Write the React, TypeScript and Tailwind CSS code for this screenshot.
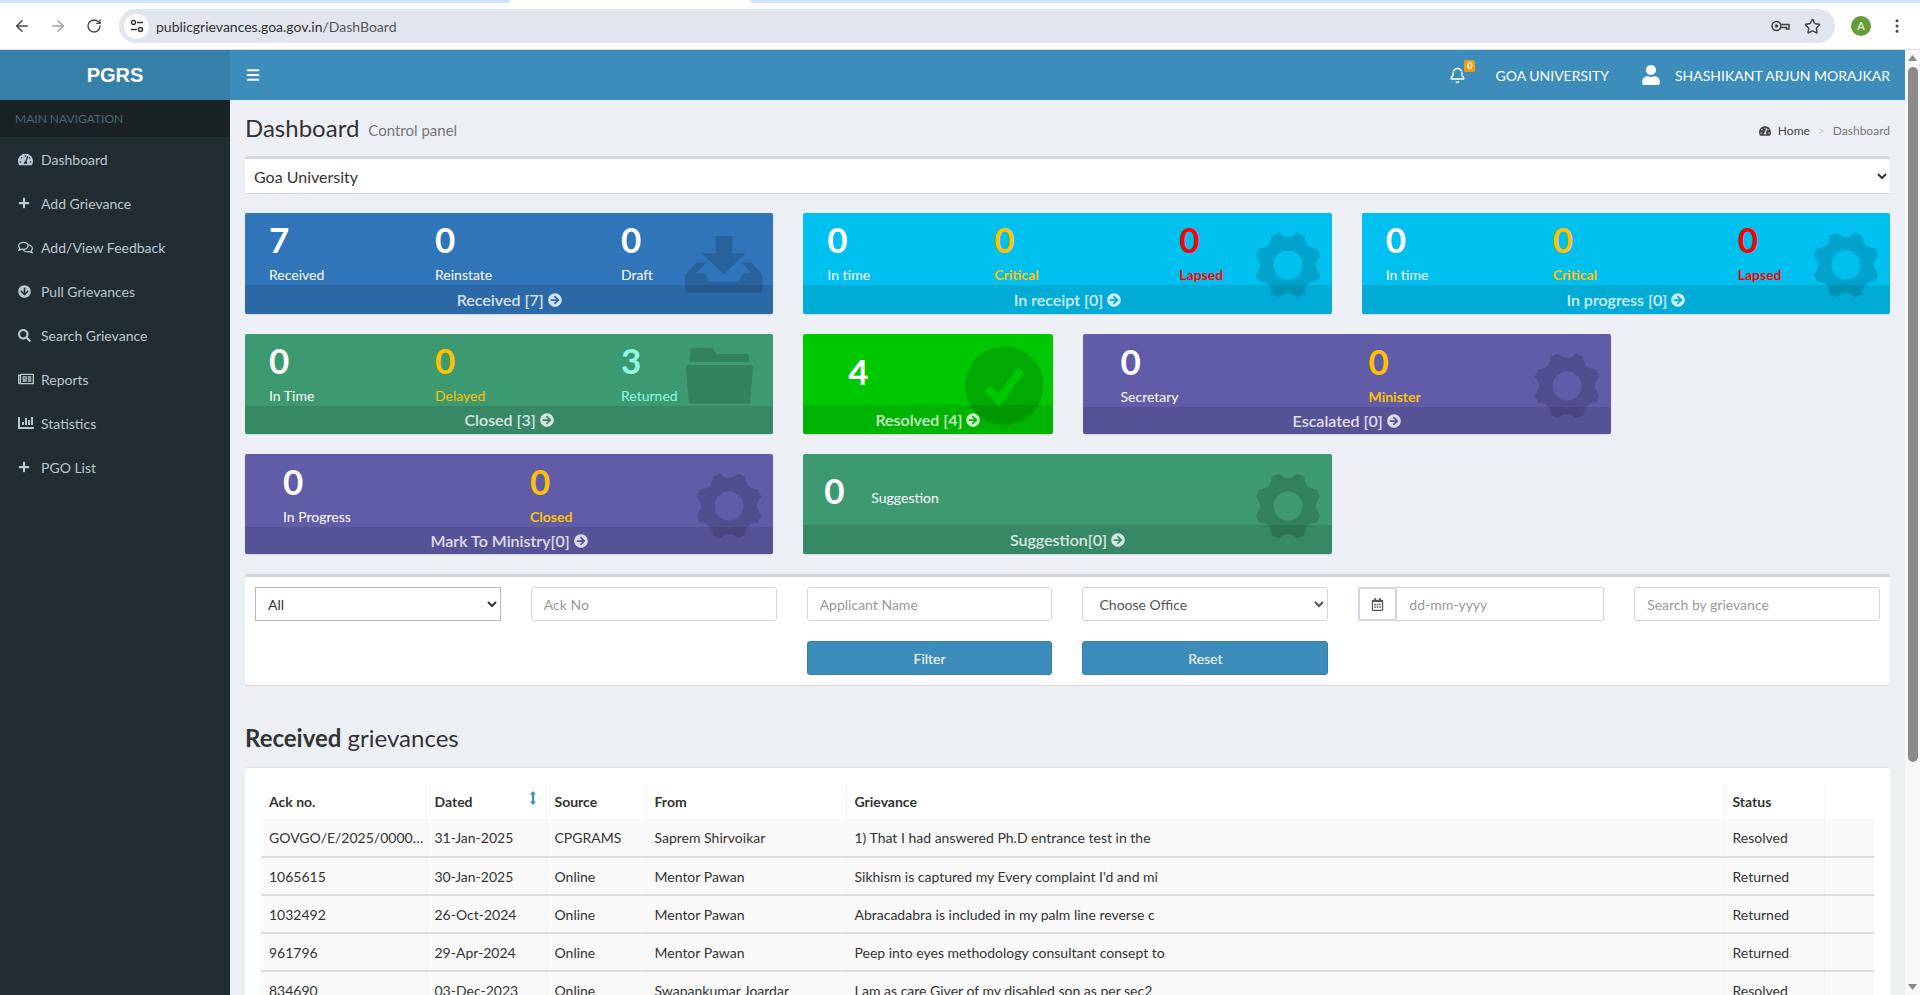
import { ArrowLeft, ArrowRight, RotateCw, Star, EllipsisVertical, Menu, Bell } from "lucide-react";
import {
  FaTachometerAlt,
  FaPlus,
  FaRegComments,
  FaArrowCircleDown,
  FaArrowCircleRight,
  FaSearch,
  FaRegNewspaper,
  FaChartBar,
  FaRegCalendarAlt,
  FaUser,
} from "react-icons/fa";

const navItems = [
  { label: "Dashboard", icon: <FaTachometerAlt size={15} /> },
  { label: "Add Grievance", icon: <FaPlus size={12} /> },
  { label: "Add/View Feedback", icon: <FaRegComments size={15} /> },
  { label: "Pull Grievances", icon: <FaArrowCircleDown size={13} /> },
  { label: "Search Grievance", icon: <FaSearch size={13} /> },
  { label: "Reports", icon: <FaRegNewspaper size={16} /> },
  { label: "Statistics", icon: <FaChartBar size={16} /> },
  { label: "PGO List", icon: <FaPlus size={12} /> },
];

// 8 tooth gear, same shape as the faded icon on the cards
function gearPath() {
  const c = 34;
  const pt = (deg: number, r: number) => {
    const a = (deg * Math.PI) / 180;
    return `${(c + r * Math.sin(a)).toFixed(2)} ${(c - r * Math.cos(a)).toFixed(2)}`;
  };
  let d = "";
  for (let i = 0; i < 8; i++) {
    const mid = i * 45 + 22.5;
    d += i === 0 ? `M${pt(mid - 7, 33.5)}` : `L${pt(mid - 7, 33.5)}`;
    d += `L${pt(mid + 7, 33.5)}`;
    d += `Q${pt(mid + 22.5, 23.5)} ${pt(mid + 38, 33.5)}`;
  }
  d += "Z";
  d += `M${c - 14.5} ${c}a14.5 14.5 0 1 0 29 0a14.5 14.5 0 1 0 -29 0Z`;
  return d;
}

function Gear() {
  return (
    <svg viewBox="0 0 68 68" className="absolute right-[10px] top-[18px] h-[68px] w-[68px]">
      <path d={gearPath()} fillRule="evenodd" fill="rgba(0,0,0,0.15)" />
    </svg>
  );
}

function InboxIcon() {
  return (
    <svg viewBox="0 0 270 240" className="absolute right-[3px] top-[12px] h-[80px] w-[90px]">
      <path
        fill="rgba(0,0,0,0.15)"
        d="M107 33H157V85H197L131 148L65 85H107ZM15 150L50 112H80L48 145H75L87 170H175L190 145H215L183 112H213L248 150V188Q248 203 233 203H30Q15 203 15 188Z"
      />
    </svg>
  );
}

function FolderIcon() {
  return (
    <svg viewBox="0 0 270 270" className="absolute right-[3px] top-[6px] h-[90px] w-[90px]">
      <path
        fill="rgba(0,0,0,0.15)"
        d="M28 65L32 30Q33 23 40 23H92Q97 23 100 28L110 42H200Q207 42 207 49L208 65ZM25 75H212Q219 75 219 82L211 184Q210 191 203 191H33Q26 191 26 184L18 82Q18 75 25 75Z"
      />
    </svg>
  );
}

function CheckIcon() {
  return (
    <svg viewBox="0 0 270 270" className="absolute right-[2px] top-[6px] h-[90px] w-[90px]">
      <circle cx="130" cy="137" r="118" fill="rgba(0,0,0,0.15)" />
      <path d="M79 143L114 180L180 90" fill="none" stroke="#00c800" strokeWidth="24" />
    </svg>
  );
}

function Stat(props: { value: string; label: string; tone?: string; bold?: boolean; width?: string }) {
  const tone = props.tone || "text-white";
  return (
    <div className={props.width}>
      <div className={`h-[38px] text-[35px] font-bold leading-[38px] ${tone}`}>{props.value}</div>
      <div className={`mt-[7px] h-[20px] text-[14px] leading-[20px] ${tone} ${props.bold ? "font-bold" : ""}`}>
        {props.label}
      </div>
    </div>
  );
}

function CardFooter({ text }: { text: string }) {
  return (
    <div className="flex h-[29px] items-center justify-center gap-[4px] bg-black/10 text-[16px] font-semibold text-white/80">
      <span>{text}</span>
      <FaArrowCircleRight size={14} />
    </div>
  );
}

function Card(props: { className: string; footer: string; icon: React.ReactNode; children: React.ReactNode }) {
  return (
    <div className={`relative flex flex-col overflow-hidden rounded-[2px] shadow-[0_1px_1px_rgba(0,0,0,0.1)] ${props.className}`}>
      <div className="flex-1">{props.children}</div>
      <CardFooter text={props.footer} />
      {props.icon}
    </div>
  );
}

const rows = [
  ["GOVGO/E/2025/0000031", "31-Jan-2025", "CPGRAMS", "Saprem Shirvoikar", "1) That I had answered Ph.D entrance test in the", "Resolved"],
  ["1065615", "30-Jan-2025", "Online", "Mentor Pawan", "Sikhism is captured my Every complaint I'd and mi", "Returned"],
  ["1032492", "26-Oct-2024", "Online", "Mentor Pawan", "Abracadabra is included in my palm line reverse c", "Returned"],
  ["961796", "29-Apr-2024", "Online", "Mentor Pawan", "Peep into eyes methodology consultant consept to", "Returned"],
  ["834690", "03-Dec-2023", "Online", "Swapankumar Joardar", "I am as care Giver of my disabled son as per sec2", "Resolved"],
];

const YELLOW = "text-[#ffc107]";
const RED = "text-[#ff0000]";
const AQUA = "text-[#8ffbe6]";

export default function App() {
  return (
    <div className="flex h-[995px] w-[1920px] flex-col overflow-hidden bg-white [font-family:Lato,sans-serif] text-[14px] text-[#333]">
      {/* browser chrome */}
      <div className="relative h-[50px] shrink-0 border-b border-[#dadce0] bg-white">
        <div className="flex h-[3px]">
          <div className="w-[510px] rounded-br-[8px] bg-[#d3e3fd]" />
          <div className="w-[240px]" />
          <div className="flex-1 rounded-bl-[8px] bg-[#d3e3fd]" />
        </div>
        <div className="flex h-[46px] items-center pl-[13px]">
          <ArrowLeft size={18} className="text-[#474747]" />
          <ArrowRight size={18} className="ml-[18px] text-[#a0a0a0]" />
          <RotateCw size={16} className="ml-[19px] text-[#474747]" />
          <div className="ml-[17px] flex h-[34px] w-[1716px] items-center rounded-full bg-[#e1e5ed] pl-[5px] pr-[14px]">
            <div className="flex h-[25px] w-[25px] items-center justify-center rounded-full bg-white">
              <svg width="14" height="14" viewBox="0 0 14 14" fill="none" stroke="#333" strokeWidth="1.4">
                <circle cx="3.5" cy="3.5" r="2" />
                <path d="M7 3.5H13M1 10.5H7" />
                <circle cx="10.5" cy="10.5" r="2" />
              </svg>
            </div>
            <span className="ml-[7px] text-[14px] text-[#333]">
              publicgrievances.goa.gov.in<span className="text-[#555]">/DashBoard</span>
            </span>
            <div className="flex-1" />
            <svg width="19" height="12" viewBox="0 0 19 12" fill="none" stroke="#444" strokeWidth="1.5">
              <circle cx="5.5" cy="6" r="4.5" />
              <circle cx="5.5" cy="6" r="1" fill="#444" />
              <path d="M10 4.5H18V9H15.5V7.5H10" />
            </svg>
            <Star size={17} className="ml-[14px] text-[#444]" />
          </div>
          <div className="ml-[16px] flex h-[20px] w-[20px] items-center justify-center rounded-full bg-[#659c35] text-[11px] text-white">
            A
          </div>
          <EllipsisVertical size={18} className="ml-[17px] text-[#444]" />
        </div>
      </div>

      <div className="flex min-h-0 flex-1">
        {/* left column */}
        <aside className="flex w-[230px] shrink-0 flex-col bg-[#222d32]">
          <div className="flex h-[50px] items-center justify-center bg-[#367fa9] [font-family:'Liberation_Sans',sans-serif] text-[20px] font-bold text-white">
            PGRS
          </div>
          <div className="flex h-[37px] items-center bg-[#1a2226] pl-[15px] text-[12px] text-[#4b646f]">MAIN NAVIGATION</div>
          <nav>
            {navItems.map((item) => (
              <div key={item.label} className="flex h-[44px] items-center pl-[18px] text-[#b8c7ce]">
                <span className="flex w-[23px] shrink-0">{item.icon}</span>
                <span>{item.label}</span>
              </div>
            ))}
          </nav>
        </aside>

        {/* main column */}
        <div className="flex min-w-0 flex-1 flex-col bg-[#ecf0f5]">
          <header className="flex h-[50px] shrink-0 items-center bg-[#3c8dbc] pl-[15px] text-white">
            <Menu size={16} strokeWidth={3} />
            <div className="flex-1" />
            <div className="relative mr-[29px]">
              <Bell size={17} />
              <span className="absolute -right-[9px] -top-[7px] flex h-[12px] w-[11px] items-center justify-center rounded-[2px] bg-[#f39c12] text-[9px] font-bold">
                0
              </span>
            </div>
            <span className="mr-[32px]">GOA UNIVERSITY</span>
            <FaUser size={20} />
            <span className="ml-[14px] mr-[15px]">SHASHIKANT ARJUN MORAJKAR</span>
          </header>

          <main className="min-h-0 flex-1 overflow-hidden px-[15px]">
            <div className="flex h-[56px] items-center">
              <h1 className="text-[24px] leading-none text-[#333]">Dashboard</h1>
              <span className="ml-[9px] mt-[4px] text-[15px] text-[#777]">Control panel</span>
              <div className="flex-1" />
              <div className="mt-[6px] flex items-center text-[12px] text-[#444]">
                <FaTachometerAlt size={12} />
                <span className="ml-[7px]">Home</span>
                <span className="mx-[8px] text-[#ccc]">&gt;</span>
                <span className="text-[#777]">Dashboard</span>
              </div>
            </div>

            <div className="h-[37px] rounded-[3px] border-t-[3px] border-[#d2d6de] bg-white shadow-[0_1px_1px_rgba(0,0,0,0.1)]">
              <select className="h-[34px] w-full bg-white pl-[5px] pr-[2px] text-[16px] text-[#333] outline-none">
                <option>Goa University</option>
              </select>
            </div>

            <div className="mt-[20px] grid grid-cols-12 grid-rows-[101px_100px_100px] gap-x-[30px] gap-y-[20px]">
              <Card className="col-span-4 bg-[#3074b9]" footer="Received [7]" icon={<InboxIcon />}>
                <div className="flex pl-[24px] pt-[7px]">
                  <Stat value="7" label="Received" width="w-[166px]" />
                  <Stat value="0" label="Reinstate" width="w-[186px]" />
                  <Stat value="0" label="Draft" />
                </div>
              </Card>
              <Card className="col-span-4 bg-[#00c0ef]" footer="In receipt [0]" icon={<Gear />}>
                <div className="flex pl-[24px] pt-[7px]">
                  <Stat value="0" label="In time" width="w-[167px]" />
                  <Stat value="0" label="Critical" tone={YELLOW} bold width="w-[185px]" />
                  <Stat value="0" label="Lapsed" tone={RED} bold />
                </div>
              </Card>
              <Card className="col-span-4 bg-[#00c0ef]" footer="In progress [0]" icon={<Gear />}>
                <div className="flex pl-[24px] pt-[7px]">
                  <Stat value="0" label="In time" width="w-[167px]" />
                  <Stat value="0" label="Critical" tone={YELLOW} bold width="w-[185px]" />
                  <Stat value="0" label="Lapsed" tone={RED} bold />
                </div>
              </Card>

              <Card className="col-span-4 bg-[#3d9970]" footer="Closed [3]" icon={<FolderIcon />}>
                <div className="flex pl-[24px] pt-[7px]">
                  <Stat value="0" label="In Time" width="w-[166px]" />
                  <Stat value="0" label="Delayed" tone={YELLOW} width="w-[186px]" />
                  <Stat value="3" label="Returned" tone={AQUA} />
                </div>
              </Card>
              <Card className="col-span-2 bg-[#00c800]" footer="Resolved [4]" icon={<CheckIcon />}>
                <div className="pl-[45px] pt-[18px] text-[35px] font-bold leading-[38px] text-white">4</div>
              </Card>
              <Card className="col-span-4 bg-[#605ca8]" footer="Escalated [0]" icon={<Gear />}>
                <div className="flex pl-[38px] pt-[8px]">
                  <Stat value="0" label="Secretary" width="w-[248px]" />
                  <Stat value="0" label="Minister" tone={YELLOW} bold />
                </div>
              </Card>

              <Card className="col-span-4 bg-[#605ca8]" footer="Mark To Ministry[0]" icon={<Gear />}>
                <div className="flex pl-[38px] pt-[8px]">
                  <Stat value="0" label="In Progress" width="w-[247px]" />
                  <Stat value="0" label="Closed" tone={YELLOW} bold />
                </div>
              </Card>
              <Card className="col-span-4 bg-[#3d9970]" footer="Suggestion[0]" icon={<Gear />}>
                <div className="flex pl-[21px] pt-[17px]">
                  <div className="w-[47px] text-[35px] font-bold leading-[38px] text-white">0</div>
                  <div className="mt-[17px] leading-[20px] text-white">Suggestion</div>
                </div>
              </Card>
            </div>

            {/* filters */}
            <div className="mt-[20px] h-[111px] rounded-[3px] border-t-[3px] border-[#d2d6de] bg-white p-[10px] shadow-[0_1px_1px_rgba(0,0,0,0.1)]">
              <div className="grid grid-cols-6 gap-x-[30px] gap-y-[20px]">
                <select className="h-[34px] border border-[#bbb] bg-white pl-[8px] pr-[2px] text-[14px] text-[#333] outline-none">
                  <option>All</option>
                </select>
                <input placeholder="Ack No" className="h-[34px] rounded-[3px] border border-[#d2d6de] px-[12px] text-[14px] outline-none placeholder:text-[#999]" />
                <input placeholder="Applicant Name" className="h-[34px] rounded-[3px] border border-[#d2d6de] px-[12px] text-[14px] outline-none placeholder:text-[#999]" />
                <select className="h-[34px] rounded-[3px] border border-[#d2d6de] bg-white pl-[12px] pr-[2px] text-[14px] text-[#555] outline-none">
                  <option>Choose Office</option>
                </select>
                <div className="flex h-[34px]">
                  <div className="flex w-[39px] shrink-0 items-center justify-center rounded-l-[2px] border-2 border-[#d2d6de] text-[#555]">
                    <FaRegCalendarAlt size={13} />
                  </div>
                  <input placeholder="dd-mm-yyyy" className="min-w-0 flex-1 rounded-r-[3px] border border-l-0 border-[#d2d6de] px-[12px] text-[14px] outline-none placeholder:text-[#999]" />
                </div>
                <input placeholder="Search by grievance" className="h-[34px] rounded-[3px] border border-[#d2d6de] px-[12px] text-[14px] outline-none placeholder:text-[#999]" />

                <div className="col-span-2" />
                <button className="h-[34px] rounded-[3px] border border-[#367fa9] bg-[#3c8dbc] text-[14px] text-white">Filter</button>
                <button className="h-[34px] rounded-[3px] border border-[#367fa9] bg-[#3c8dbc] text-[14px] text-white">Reset</button>
              </div>
            </div>

            <h2 className="mt-[33px] h-[40px] text-[24px] leading-[40px] text-[#333]">
              <b>Received</b> grievances
            </h2>

            <div className="mt-[9px] rounded-[3px] border-t border-[#dde1e8] bg-white px-[16px] pt-[15px]">
              <table className="w-full table-fixed border-collapse">
                <colgroup>
                  <col className="w-[165px]" />
                  <col className="w-[120px]" />
                  <col className="w-[100px]" />
                  <col className="w-[200px]" />
                  <col className="w-[878px]" />
                  <col className="w-[100px]" />
                  <col />
                </colgroup>
                <thead>
                  <tr className="h-[36px] text-left">
                    <th className="border-r border-[#f4f4f4] pl-[8px]">Ack no.</th>
                    <th className="relative border-r border-[#f4f4f4] pl-[8px]">
                      Dated
                      <svg width="6" height="14" viewBox="0 0 6 14" className="absolute right-[10px] top-[8px]" fill="#3c8dbc">
                        <path d="M3 0L6 3.5H4V10.5H6L3 14L0 10.5H2V3.5H0Z" />
                      </svg>
                    </th>
                    <th className="border-r border-[#f4f4f4] pl-[8px]">Source</th>
                    <th className="border-r border-[#f4f4f4] pl-[8px]">From</th>
                    <th className="border-r border-[#f4f4f4] pl-[8px]">Grievance</th>
                    <th className="border-r border-[#f4f4f4] pl-[8px]">Status</th>
                    <th />
                  </tr>
                </thead>
                <tbody>
                  {rows.map((row) => (
                    <tr key={row[0]} className="h-[38px] border-b-2 border-[#ddd] bg-[#f9f9f9]">
                      {row.map((cell) => (
                        <td key={cell} className="truncate border-r border-[#f4f4f4] pl-[8px]">
                          {cell}
                        </td>
                      ))}
                      <td />
                    </tr>
                  ))}
                </tbody>
              </table>
            </div>
          </main>
        </div>

        {/* page scrollbar */}
        <div className="flex w-[15px] shrink-0 flex-col items-center bg-[#f8f8f8]">
          <svg width="9" height="6" viewBox="0 0 9 6" className="mt-[5px]" fill="#888">
            <path d="M4.5 0L9 6H0Z" />
          </svg>
          <div className="mt-[6px] h-[695px] w-[10px] rounded-full bg-[#8b8b8b]" />
          <div className="flex-1" />
          <svg width="9" height="6" viewBox="0 0 9 6" className="mb-[5px]" fill="#888">
            <path d="M0 0H9L4.5 6Z" />
          </svg>
        </div>
      </div>
    </div>
  );
}
